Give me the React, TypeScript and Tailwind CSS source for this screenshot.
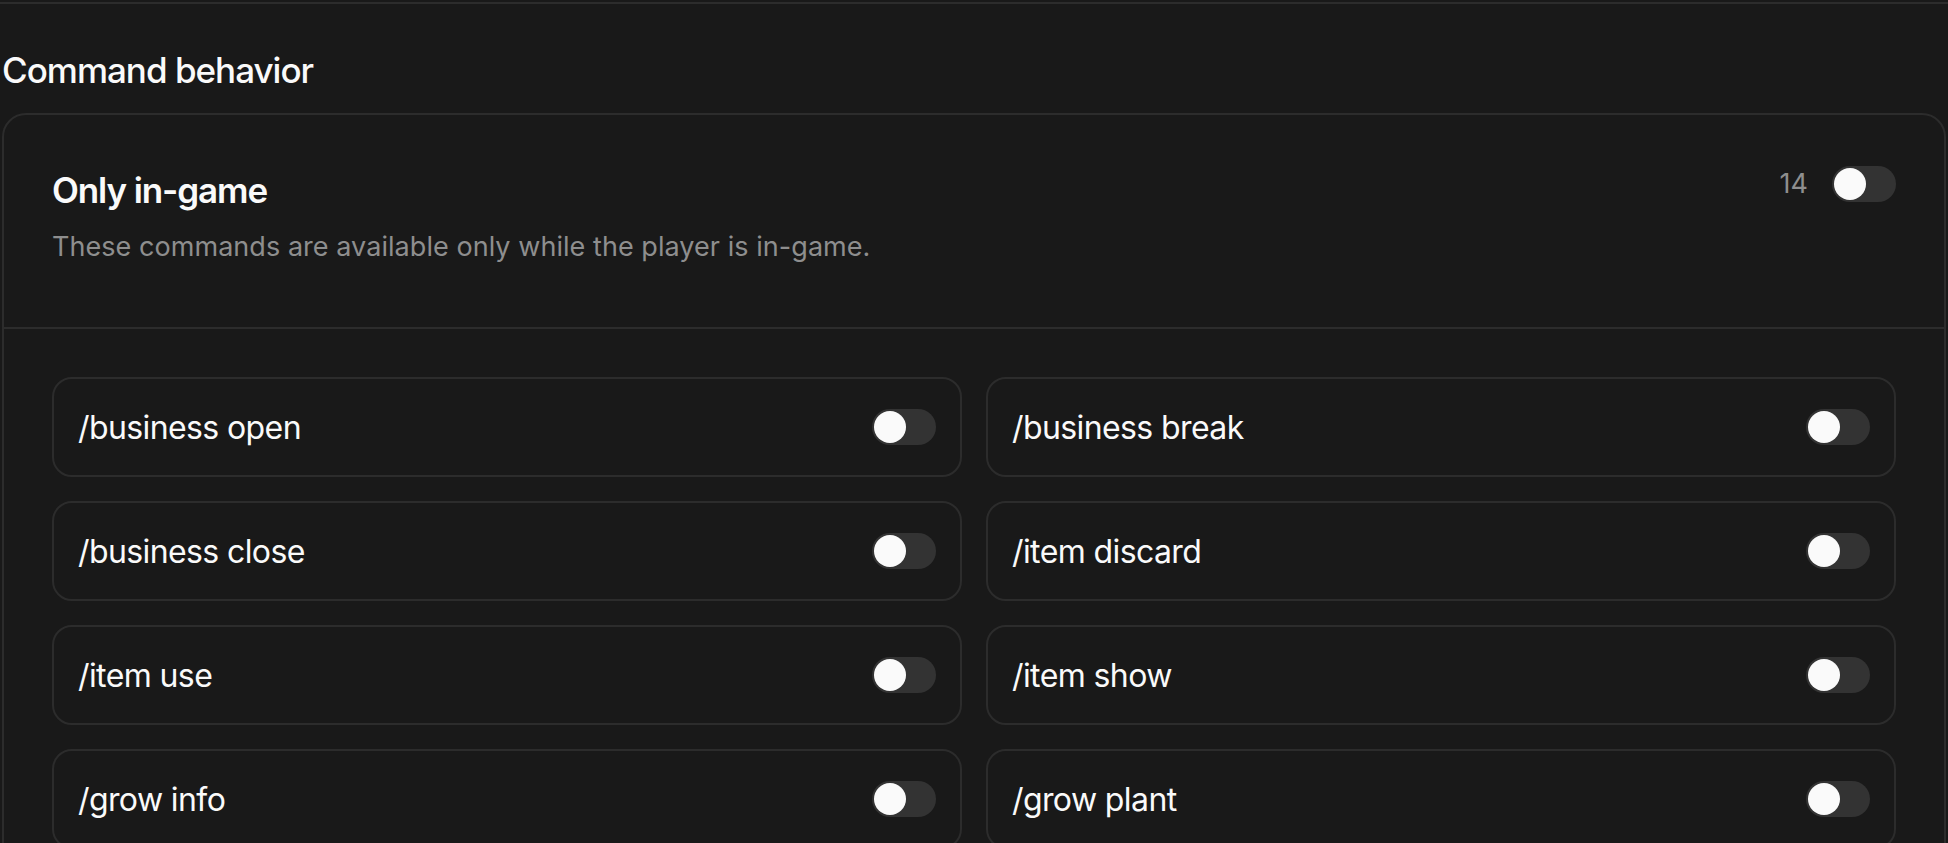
import { useState } from "react";

const commands = [
  "/business open",
  "/business break",
  "/business close",
  "/item discard",
  "/item use",
  "/item show",
  "/grow info",
  "/grow plant",
];

function Toggle({ on, onChange }: { on: boolean; onChange: () => void }) {
  return (
    <button
      type="button"
      role="switch"
      aria-checked={on}
      onClick={onChange}
      className={`relative shrink-0 w-[64px] h-[36px] rounded-full ${on ? "bg-[#fafafa]" : "bg-[#333333]"}`}
    >
      <span
        className={`absolute top-[2px] size-[32px] rounded-full ${on ? "left-[30px] bg-[#191919]" : "left-[2px] bg-[#fafafa]"}`}
      />
    </button>
  );
}

export default function App() {
  const [allOn, setAllOn] = useState(false);
  const [enabled, setEnabled] = useState<Record<string, boolean>>({});

  return (
    <div className="min-h-screen bg-[#191919] text-[#fafafa] font-['Inter',sans-serif]">
      <div className="pt-[2px]">
        <div className="border-t-2 border-[#2c2c2c]" />
      </div>
      <section className="px-[2px]">
        <h2 className="pt-[38px] text-[35px] leading-[56px] font-medium tracking-[-1px]">
          Command behavior
        </h2>
        <div className="mt-[15px] rounded-[24px] border-2 border-[#2c2c2c]">
          <div className="flex items-start justify-between px-[48px] pt-[49px] pb-[60px] border-b-2 border-[#2c2c2c]">
            <div>
              <h3 className="-mt-[2px] text-[35px] leading-[56px] font-semibold tracking-[-1.1px]">Only in-game</h3>
              <p className="mt-[9px] text-[27px] leading-[40px] tracking-[0.05px] text-[#8e8e8e]">
                These commands are available only while the player is in-game.
              </p>
            </div>
            <div className="flex items-center gap-[24px]">
              <span className="text-[27px] text-[#8e8e8e]">14</span>
              <Toggle on={allOn} onChange={() => setAllOn(!allOn)} />
            </div>
          </div>
          <div className="grid grid-cols-2 gap-[24px] px-[48px] pt-[48px] pb-[48px]">
            {commands.map((cmd) => (
              <div
                key={cmd}
                className="h-[100px] flex items-center justify-between px-[24px] rounded-[20px] border-2 border-[#2c2c2c]"
              >
                <span className="pt-[2px] text-[32px] leading-[48px] tracking-[-0.6px]">{cmd}</span>
                <Toggle
                  on={!!enabled[cmd]}
                  onChange={() => setEnabled({ ...enabled, [cmd]: !enabled[cmd] })}
                />
              </div>
            ))}
          </div>
        </div>
      </section>
    </div>
  );
}
